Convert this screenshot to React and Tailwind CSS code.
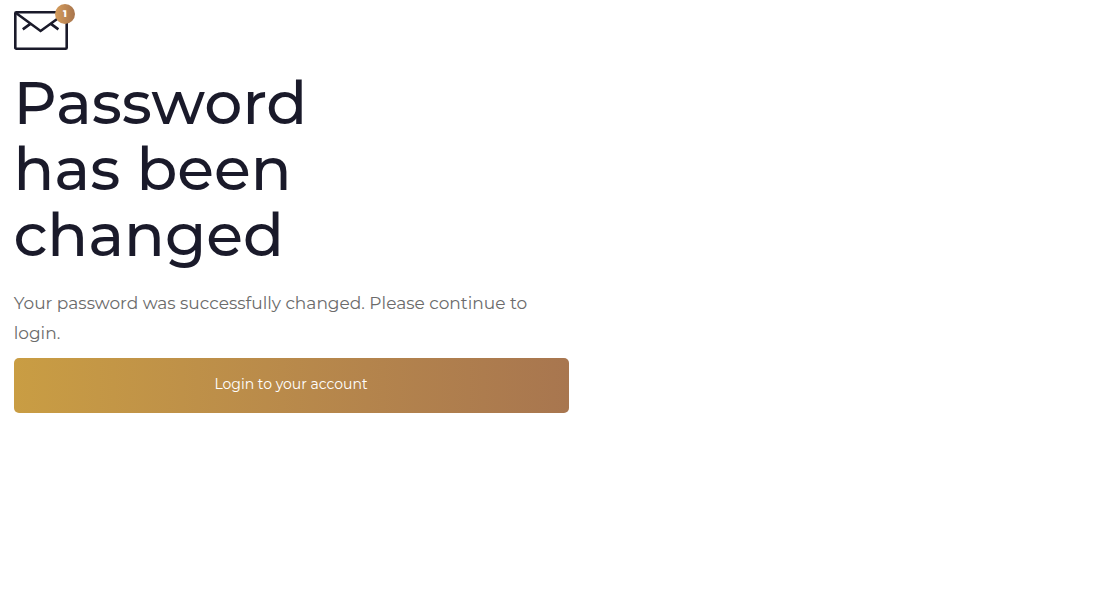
export default function App() {
  return (
    <main className="min-h-screen bg-white pl-[14px] font-['Montserrat','Inter',sans-serif]">
      <section className="w-[555px]">
        <svg className="block h-[60px] w-[64px]" viewBox="0 0 64 60" fill="none">
          <defs><linearGradient id="badge"><stop stopColor="#d69d5c" /><stop offset="1" stopColor="#a8754d" /></linearGradient></defs>
          <g stroke="#1a1a2a" strokeWidth="2.6" strokeLinejoin="round">
            <rect x="1.3" y="12.3" width="51.4" height="36.4" rx="1" />
            <path strokeLinejoin="miter" d="M2 13L26.6 31L50 14M8.8 29.4L16.6 23.6M44.4 29.4L36.6 23.6" />
          </g>
          <circle cx="51" cy="14" r="10" fill="url(#badge)" />
          <text x="51" y="17.4" textAnchor="middle" fontSize="9.5" fontWeight="800" fill="white" className="font-['Montserrat','Inter',sans-serif]" textRendering="geometricPrecision">1</text>
        </svg>
        <h1 className="-ml-[0.5px] mt-[10px] text-[60px] font-medium leading-[66px] text-[#1a1a2a]">
          <span className="block">Password</span><span className="block">has been</span><span className="block">changed</span>
        </h1>
        <p className="-ml-[0.3px] mt-5 text-[17px] leading-[30px] text-[#6b6b6b]">Your password was successfully changed. Please continue to<br />login.</p>
        <button className="mt-[10px] h-[55px] w-full rounded-[5px] bg-linear-to-r from-[#c99d43] to-[#a8764f] pb-[2px] pr-px text-[14px] text-white">Login to your account</button>
      </section>
    </main>
  );
}
